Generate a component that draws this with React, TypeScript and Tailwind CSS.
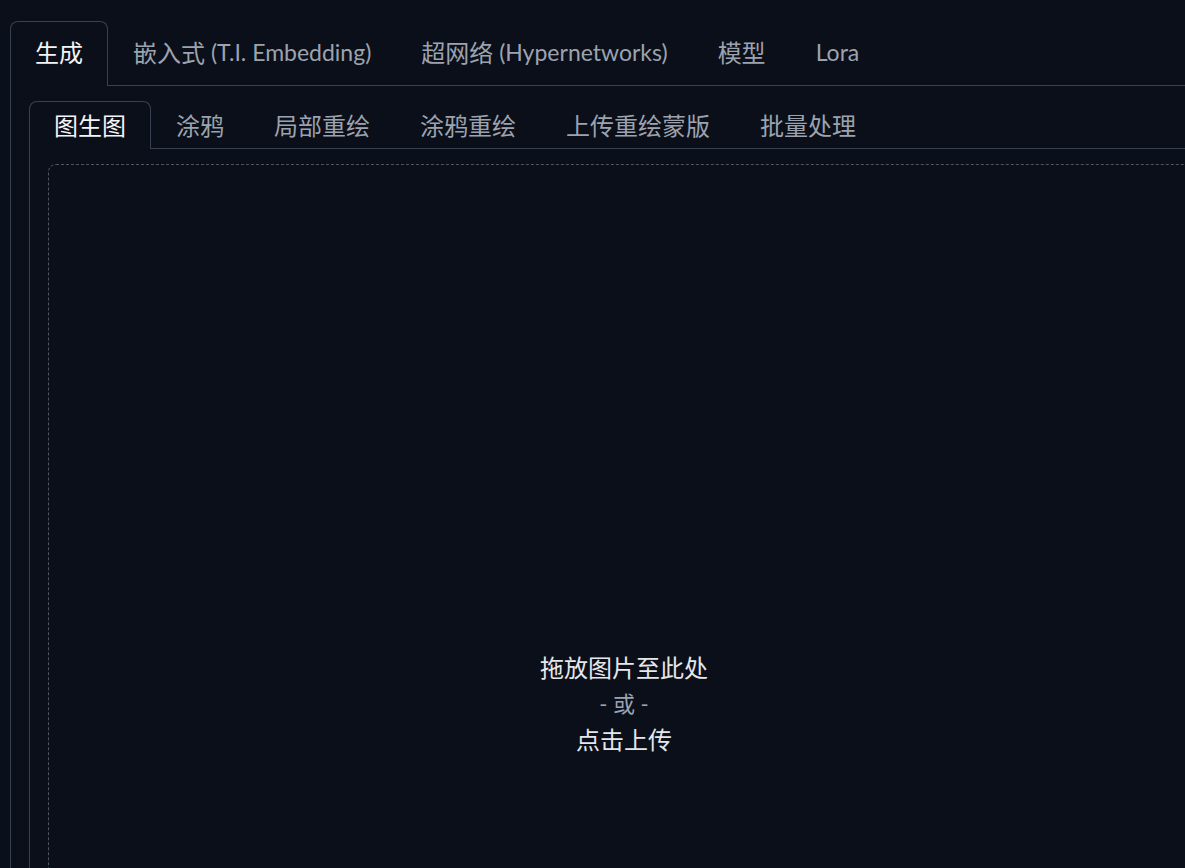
const outerTabs: [string, string?][] = [
  ['生成'],
  ['嵌入式', ' (T.I. Embedding)'],
  ['超网络', ' (Hypernetworks)'],
  ['模型'],
  ['', 'Lora'],
];
const innerTabs = ['图生图', '涂鸦', '局部重绘', '涂鸦重绘', '上传重绘蒙版', '批量处理'];

function Tab({ active, tall, children }: { active: boolean; tall?: boolean; children: React.ReactNode }) {
  return (
    <button
      className={`-mb-px flex items-center px-6 rounded-t-lg border border-b-0 text-[24px] leading-none whitespace-pre ${
        tall ? 'h-[65px] pb-[3px]' : 'h-[48px]'
      } ${active ? 'border-[#374151] bg-[#0b0f19] text-[#f3f4f6]' : 'border-transparent text-[#9ca3af]'}`}
    >
      {children}
    </button>
  );
}

export default function App() {
  return (
    <div
      className="w-[1185px] h-[868px] overflow-hidden bg-[#0b0f19]"
      style={{ fontFamily: 'Lato, "Noto Sans CJK SC", sans-serif' }}
    >
      <div className="w-[1400px] pl-[10px] pt-[21px]">
        <div className="flex border-b border-[#374151]">
          {outerTabs.map(([cn, en], i) => (
            <Tab key={i} active={i === 0} tall>
              {cn}
              {en && <span className="text-[23px]">{en}</span>}
            </Tab>
          ))}
        </div>
        <div className="border-x border-[#374151] pl-[18px] pt-[15px] h-[900px]">
          <div className="flex border-b border-[#374151]">
            {innerTabs.map((t, i) => (
              <Tab key={t} active={i === 0}>
                {t}
              </Tab>
            ))}
          </div>
          <div className="border-l border-[#374151] pl-[18px] pt-[15px] h-[900px]">
            <div className="w-[1152px] h-[1080px] rounded-lg border border-dashed border-[#4b5563] flex flex-col items-center justify-center text-[24px] leading-[36px]">
              <span className="text-[#e5e7eb]">拖放图片至此处</span>
              <span className="text-[#9ca3af] text-[22px]">- 或 -</span>
              <span className="text-[#e5e7eb]">点击上传</span>
            </div>
          </div>
        </div>
      </div>
    </div>
  );
}
